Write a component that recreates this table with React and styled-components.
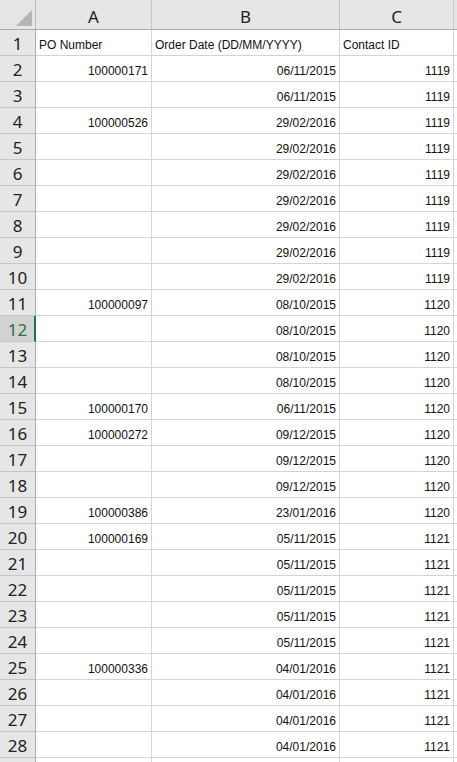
import React from 'react';
import styled, { createGlobalStyle } from 'styled-components';

const GlobalStyle = createGlobalStyle`
    html, body {
        margin: 0;
        padding: 0;
        background: #fff;
        overflow: hidden;
    }
`;

const Sheet = styled.div`
    display: grid;
    grid-template-columns: 36px 116px 188px 114px 1fr;
    grid-template-rows: 30px;
    grid-auto-rows: 26px;
    width: 457px;
    height: 762px;
    overflow: hidden;
    font-family: 'Liberation Sans', Arial, sans-serif;
    font-size: 12px;
    color: #111;
`;

const Corner = styled.div`
    position: relative;
    background: #e6e6e6;
    border-right: 1px solid #b8b8b8;
    border-bottom: 1px solid #ababab;

    &::after {
        content: '';
        position: absolute;
        right: 3px;
        bottom: 3px;
        width: 0;
        height: 0;
        border-left: 16px solid transparent;
        border-bottom: 16px solid #b4b4b4;
    }
`;

const ColHead = styled.div`
    display: flex;
    align-items: center;
    justify-content: center;
    background: #e6e6e6;
    border-right: 1px solid #c6c6c6;
    border-bottom: 1px solid #ababab;
    font-family: 'Noto Sans', 'Open Sans', sans-serif;
    font-size: 17px;
    color: #222;
    padding-top: 4px;
`;

const RowHead = styled.div`
    display: flex;
    align-items: center;
    justify-content: center;
    background: ${({ $active }) => ($active ? '#d2d2d2' : '#e6e6e6')};
    border-right: ${({ $active }) => ($active ? '2px solid #217346' : '1px solid #ababab')};
    border-bottom: 1px solid #c6c6c6;
    font-family: 'Noto Sans', 'Open Sans', sans-serif;
    font-size: 17px;
    color: ${({ $active }) => ($active ? '#217346' : '#222')};
    padding: 2px 0 0 ${({ $active }) => ($active ? '1px' : '0')};
`;

const Cell = styled.div`
    display: flex;
    align-items: center;
    justify-content: ${({ $num }) => ($num ? 'flex-end' : 'flex-start')};
    padding: 4px 3px 0;
    border-right: 1px solid #d4d4d4;
    border-bottom: 1px solid #d4d4d4;
    white-space: nowrap;
    overflow: hidden;
`;

const rows = [
    ['100000171', '06/11/2015', '1119'],
    ['', '06/11/2015', '1119'],
    ['100000526', '29/02/2016', '1119'],
    ['', '29/02/2016', '1119'],
    ['', '29/02/2016', '1119'],
    ['', '29/02/2016', '1119'],
    ['', '29/02/2016', '1119'],
    ['', '29/02/2016', '1119'],
    ['', '29/02/2016', '1119'],
    ['100000097', '08/10/2015', '1120'],
    ['', '08/10/2015', '1120'],
    ['', '08/10/2015', '1120'],
    ['', '08/10/2015', '1120'],
    ['100000170', '06/11/2015', '1120'],
    ['100000272', '09/12/2015', '1120'],
    ['', '09/12/2015', '1120'],
    ['', '09/12/2015', '1120'],
    ['100000386', '23/01/2016', '1120'],
    ['100000169', '05/11/2015', '1121'],
    ['', '05/11/2015', '1121'],
    ['', '05/11/2015', '1121'],
    ['', '05/11/2015', '1121'],
    ['', '05/11/2015', '1121'],
    ['100000336', '04/01/2016', '1121'],
    ['', '04/01/2016', '1121'],
    ['', '04/01/2016', '1121'],
    ['', '04/01/2016', '1121'],
];

const App = () => {
    return (
        <>
            <GlobalStyle />
            <Sheet>
                <Corner />
                <ColHead>A</ColHead>
                <ColHead>B</ColHead>
                <ColHead>C</ColHead>
                <ColHead />

                <RowHead>1</RowHead>
                <Cell>PO Number</Cell>
                <Cell>Order Date (DD/MM/YYYY)</Cell>
                <Cell>Contact ID</Cell>
                <Cell />

                {rows.map(([po, date, id], i) => (
                    <React.Fragment key={i}>
                        <RowHead $active={i + 2 === 12}>{i + 2}</RowHead>
                        <Cell $num>{po}</Cell>
                        <Cell $num>{date}</Cell>
                        <Cell $num>{id}</Cell>
                        <Cell />
                    </React.Fragment>
                ))}

                {/* row 29 is cut off by the window edge */}
                <RowHead />
                <Cell />
                <Cell />
                <Cell />
                <Cell />
            </Sheet>
        </>
    );
};

export default App;
